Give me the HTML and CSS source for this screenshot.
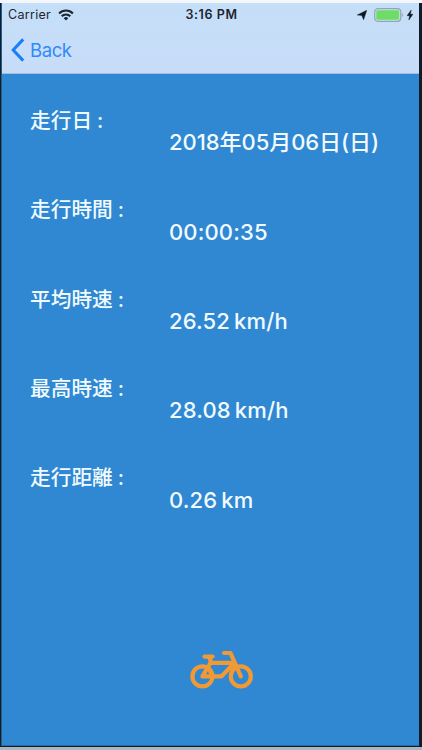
FILE: index.html
```html
<!DOCTYPE html>
<html lang="ja">
<head>
  <meta charset="UTF-8" />
  <meta name="viewport" content="width=device-width, initial-scale=1" />
  <title>走行記録</title>
  <link rel="stylesheet" href="styles.css">
</head>
<body>
  <div class="screen">
    <header class="header">
      <div class="status">
        <div class="status-left">
          <span class="carrier">Carrier</span>
          <svg class="wifi" viewBox="0 0 16 12" width="16" height="12">
            <path d="M8 11.6 L5.7 9.2 A3.3 3.3 0 0 1 10.3 9.2 Z" fill="#1c252f" />
            <path d="M3.7 7.3 A6 6 0 0 1 12.3 7.3 M1.1 4.4 A9.8 9.8 0 0 1 14.9 4.4" fill="none" stroke="#1c252f" stroke-width="2.1" />
          </svg>
        </div>
        <span class="time">3:16 PM</span>
        <div class="status-right">
          <svg class="location" viewBox="0 0 10 10" width="10" height="10">
            <path d="M9.8 0.2 L6.6 9.8 L4.8 5.4 L0.2 5 Z" fill="#10161d" stroke="#10161d" stroke-width="0.4" />
          </svg>
          <svg class="battery" viewBox="0 0 30 14" width="30" height="14">
            <rect x="0.7" y="0.7" width="26" height="12.6" rx="3" fill="#c3e2e9" stroke="#93a6b5" stroke-width="1.2" />
            <rect x="2.3" y="2.3" width="22.8" height="9.4" rx="1.4" fill="#6fdc68" />
            <path d="M27.8 4.8 Q29.8 7 27.8 9.2 Z" fill="#8b9dac" />
          </svg>
          <svg class="bolt" viewBox="0 0 6 10" width="6" height="10">
            <path d="M4.2 0 L0 5.7 H2.6 L1.8 10 L6 4.2 H3.4 Z" fill="#10161d" stroke="#10161d" stroke-width="0.4" />
          </svg>
        </div>
      </div>
      <a class="back" href="#">
        <svg viewBox="0 0 14 24" width="14" height="24">
          <path d="M12.2 1.4 L2.2 12 L12.2 22.6" fill="none" stroke="#187efa" stroke-width="3" />
        </svg>
        <span>Back</span>
      </a>
    </header>

    <main class="record">
      <dl class="list">
        <div class="row">
          <dt>走行日<span class="colon">:</span></dt>
          <dd class="date">2018年05月06日(日)</dd>
        </div>
        <div class="row">
          <dt>走行時間<span class="colon">:</span></dt>
          <dd class="duration">00:00:35</dd>
        </div>
        <div class="row">
          <dt>平均時速<span class="colon">:</span></dt>
          <dd>26.52 km/h</dd>
        </div>
        <div class="row">
          <dt>最高時速<span class="colon">:</span></dt>
          <dd>28.08 km/h</dd>
        </div>
        <div class="row">
          <dt>走行距離<span class="colon">:</span></dt>
          <dd>0.26 km</dd>
        </div>
      </dl>

      <svg class="bike" viewBox="0 0 64 40" width="64" height="40">
        <g fill="none" stroke="#f19a35" stroke-width="4.2" stroke-linejoin="round" stroke-linecap="round">
          <circle cx="12.4" cy="26.4" r="10" />
          <circle cx="50.8" cy="26.4" r="10" />
          <path d="M12.4 26.4 H31.5 L44.5 12.8 H20.5 L12.4 26.4" />
          <path d="M19 7 L21.5 12.8 M18.5 18 L22.5 26" />
          <path d="M14.5 6.6 H22.5" />
          <path d="M50.8 26.4 L40.5 3 H34" />
        </g>
      </svg>
    </main>
  </div>
</body>
</html>
```
FILE: styles.css
```css
* {
  box-sizing: border-box;
}

body {
  margin: 0;
  height: 750px;
  padding: 3px 3px 4px 1px;
  background: linear-gradient(to bottom, #f4f7fa 3px, #101d29 3px, #101d29 747px, #a9b7c2 747px);
  font-family: Inter, "Noto Sans CJK JP", sans-serif;
  overflow: hidden;
}

.screen {
  height: 743px;
  display: flex;
  flex-direction: column;
  background: #3087d2;
  border-left: 1px solid #245c8c;
  border-bottom: 1px solid #286ba5;
}

.header {
  height: 71px;
  background: linear-gradient(to bottom, #c5dff8, #c8dcf8);
  border-bottom: 1px solid #9fbfdd;
}

.status {
  height: 23px;
  display: grid;
  grid-template-columns: 1fr auto 1fr;
  align-items: center;
  padding: 0 6px;
  color: #1c252f;
  font-size: 12.5px;
}

.status-left,
.status-right {
  display: flex;
  align-items: center;
}

.status-left {
  gap: 7px;
}

.carrier {
  letter-spacing: 0.3px;
}

.time {
  padding-left: 2px;
  font-weight: 600;
  letter-spacing: 0.6px;
}

.status-right {
  justify-content: flex-end;
}

.battery {
  margin-left: 7px;
}

.bolt {
  margin-left: 3px;
}

.back {
  display: inline-flex;
  align-items: center;
  gap: 5px;
  height: 48px;
  padding: 0 0 0 9px;
  color: #2f8bf8;
  font-size: 18.5px;
  letter-spacing: -0.4px;
  text-decoration: none;
}

.record {
  flex: 1;
  display: flex;
  flex-direction: column;
  padding: 32px 0 0 28px;
  color: #f0fbff;
}

.list {
  margin: 0;
}

.row {
  height: 89.3px;
}

dt {
  height: 30px;
  line-height: 30px;
  font-size: 20.7px;
  font-weight: 500;
}

.colon {
  margin-left: 5px;
}

dd {
  margin: -8.6px 0 0 139px;
  height: 30px;
  line-height: 30px;
  font-size: 22px;
  font-weight: 500;
  letter-spacing: 0.15px;
  word-spacing: -2px;
  white-space: nowrap;
}

.date {
  letter-spacing: -0.05px;
}

.bike {
  margin: 98px 0 0 160px;
}
```
